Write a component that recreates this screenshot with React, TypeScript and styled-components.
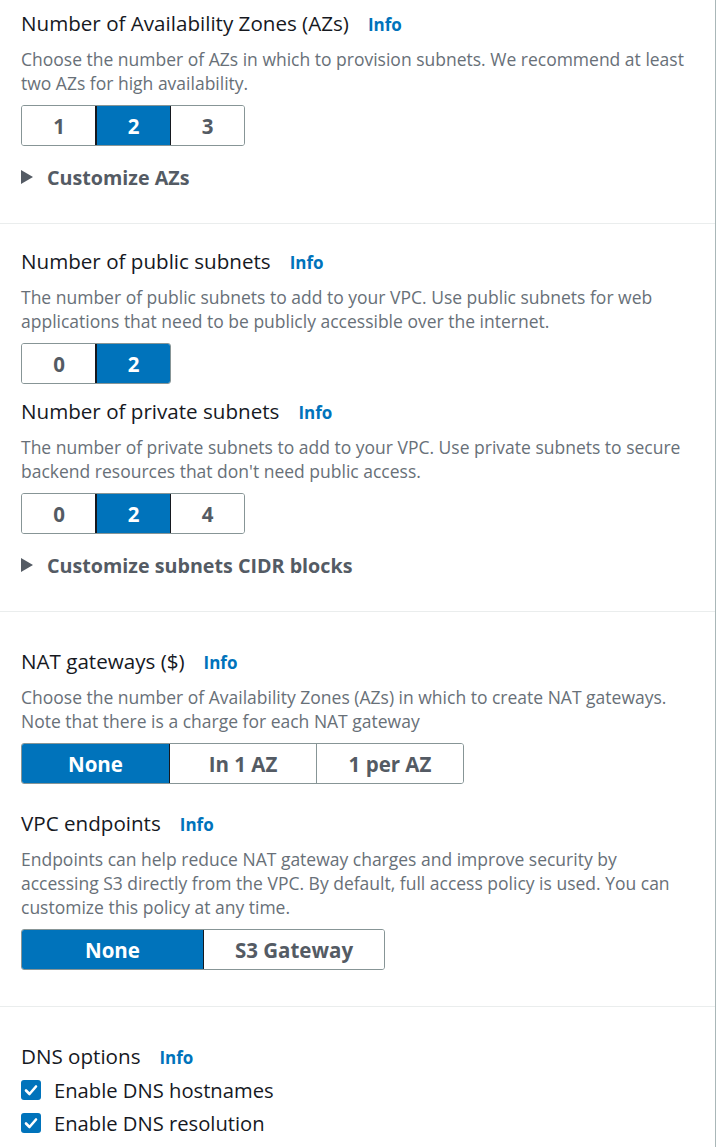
import styled, { createGlobalStyle } from 'styled-components';

const GlobalStyle = createGlobalStyle`
    html, body {
        margin: 0;
        padding: 0;
        background: #ffffff;
    }
    body {
        font-family: "Open Sans", "Noto Sans", sans-serif;
        color: #16191f;
    }
`;

const Panel = styled.div`
    width: 716px;
    min-height: 1147px;
    box-sizing: border-box;
    border-right: 1px solid #aab7b8;
    background: #ffffff;
`;

const Section = styled.section<{ $top: number; $bottom: number; $last?: boolean }>`
    padding: ${(p) => p.$top}px 21px ${(p) => p.$bottom}px 21px;
    border-bottom: ${(p) => (p.$last ? 'none' : '1px solid #eaeded')};
`;

const Field = styled.div<{ $space?: number }>`
    margin-top: ${(p) => p.$space ?? 0}px;
`;

const LabelRow = styled.div`
    display: flex;
    align-items: baseline;
    gap: 19px;
    height: 24px;
    line-height: 24px;
    white-space: nowrap;
`;

const Label = styled.span`
    font-size: 20.6px;
    color: #16191f;
`;

const InfoLink = styled.a`
    font-size: 17px;
    font-weight: 700;
    color: #0073bb;
    text-decoration: none;
    cursor: pointer;
`;

const Description = styled.p`
    margin: 12px 0 0;
    font-size: 17.5px;
    line-height: 24px;
    color: #687078;
`;

const Segmented = styled.div`
    display: inline-flex;
    margin-top: 10px;
    border: 1px solid #879596;
    border-radius: 3px;
    overflow: hidden;
`;

const Segment = styled.button<{ $width: number; $active?: boolean }>`
    width: ${(p) => p.$width}px;
    height: 39px;
    box-sizing: border-box;
    padding: 0;
    margin: 0;
    font-family: inherit;
    font-size: 20.5px;
    font-weight: 700;
    color: ${(p) => (p.$active ? '#ffffff' : '#545b64')};
    background: ${(p) => (p.$active ? '#0073bb' : '#ffffff')};
    border: none;
    border-left: 1px solid ${(p) => (p.$active ? '#16191f' : '#879596')};
    outline: ${(p) => (p.$active ? '1px solid #16191f' : 'none')};
    outline-offset: 0;
    position: relative;
    z-index: ${(p) => (p.$active ? 1 : 0)};
    cursor: pointer;

    &:first-child {
        border-left: none;
    }
`;

const Expander = styled.div`
    display: flex;
    align-items: center;
    gap: 14px;
    margin-top: 19px;
    height: 24px;
    font-size: 19.7px;
    font-weight: 700;
    color: #545b64;
    cursor: pointer;
`;

const Triangle = styled.span`
    width: 0;
    height: 0;
    border-top: 7px solid transparent;
    border-bottom: 7px solid transparent;
    border-left: 12px solid #545b64;
`;

const CheckList = styled.div`
    display: flex;
    flex-direction: column;
    gap: 9px;
    margin-top: 10px;
`;

const CheckRow = styled.label`
    display: flex;
    align-items: center;
    gap: 13px;
    height: 24px;
    font-size: 20.2px;
    color: #16191f;
`;

const Box = styled.span`
    width: 20px;
    height: 20px;
    border-radius: 3px;
    background: #0073bb;
    display: flex;
    align-items: center;
    justify-content: center;
`;

type SegProps = { options: string[]; selected: number; width: number };

const SegmentGroup = ({ options, selected, width }: SegProps) => (
    <Segmented>
        {options.map((o, i) => (
            <Segment key={o} $width={width} $active={i === selected}>
                {o}
            </Segment>
        ))}
    </Segmented>
);

const Heading = ({ text }: { text: string }) => (
    <LabelRow>
        <Label>{text}</Label>
        <InfoLink>Info</InfoLink>
    </LabelRow>
);

const Check = ({ text }: { text: string }) => (
    <CheckRow>
        <Box>
            <svg width="14" height="12" viewBox="0 0 14 12">
                <path d="M2 6.5 L5.5 10 L12 2.5" fill="none" stroke="#ffffff" strokeWidth="2.6" strokeLinecap="round" strokeLinejoin="round" />
            </svg>
        </Box>
        {text}
    </CheckRow>
);

const App = () => (
    <>
        <GlobalStyle />
        <Panel>
            <Section $top={11} $bottom={34}>
                <Heading text="Number of Availability Zones (AZs)" />
                <Description>
                    Choose the number of AZs in which to provision subnets. We recommend at least two AZs for high availability.
                </Description>
                <SegmentGroup options={['1', '2', '3']} selected={1} width={74} />
                <Expander>
                    <Triangle />
                    Customize AZs
                </Expander>
            </Section>
            <Section $top={25} $bottom={34}>
                <Heading text="Number of public subnets" />
                <Description>
                    The number of public subnets to add to your VPC. Use public subnets for web applications that need to be publicly accessible over the internet.
                </Description>
                <SegmentGroup options={['0', '2']} selected={1} width={74} />
                <Field $space={15}>
                    <Heading text="Number of private subnets" />
                    <Description>
                        The number of private subnets to add to your VPC. Use private subnets to secure backend resources that don't need public access.
                    </Description>
                    <SegmentGroup options={['0', '2', '4']} selected={1} width={74} />
                </Field>
                <Expander>
                    <Triangle />
                    Customize subnets CIDR blocks
                </Expander>
            </Section>
            <Section $top={37} $bottom={36}>
                <Heading text="NAT gateways ($)" />
                <Description>
                    Choose the number of Availability Zones (AZs) in which to create NAT gateways. Note that there is a charge for each NAT gateway
                </Description>
                <SegmentGroup options={['None', 'In 1 AZ', '1 per AZ']} selected={0} width={147} />
                <Field $space={27}>
                    <Heading text="VPC endpoints" />
                    <Description>
                        Endpoints can help reduce NAT gateway charges and improve security by accessing S3 directly from the VPC. By default, full access policy is used. You can customize this policy at any time.
                    </Description>
                    <SegmentGroup options={['None', 'S3 Gateway']} selected={0} width={181} />
                </Field>
            </Section>
            <Section $top={37} $bottom={0} $last>
                <Heading text="DNS options" />
                <CheckList>
                    <Check text="Enable DNS hostnames" />
                    <Check text="Enable DNS resolution" />
                </CheckList>
            </Section>
        </Panel>
    </>
);

export default App;
